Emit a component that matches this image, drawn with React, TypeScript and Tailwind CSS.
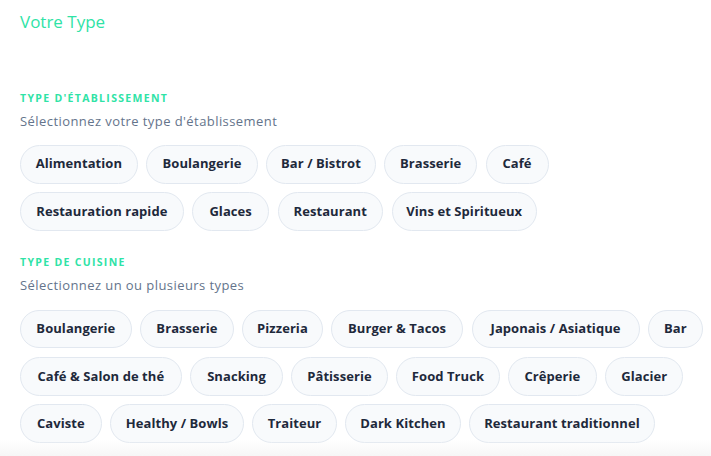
import React, { useState } from 'react';

type Chip = { label: string; w: string };

// chip widths measured off the design so the rows wrap the same way
const etablissements: Chip[] = [
  { label: 'Alimentation', w: 'w-[117.7px]' },
  { label: 'Boulangerie', w: 'w-[111.4px]' },
  { label: 'Bar / Bistrot', w: 'w-[109.4px]' },
  { label: 'Brasserie', w: 'w-[92.7px]' },
  { label: 'Café', w: 'w-[63px]' },
  { label: 'Restauration rapide', w: 'w-[163.7px]' },
  { label: 'Glaces', w: 'w-[76.7px]' },
  { label: 'Restaurant', w: 'w-[105.4px]' },
  { label: 'Vins et Spiritueux', w: 'w-[145.4px]' },
];

const cuisines: Chip[] = [
  { label: 'Boulangerie', w: 'w-[111.7px]' },
  { label: 'Brasserie', w: 'w-[93.4px]' },
  { label: 'Pizzeria', w: 'w-[80.4px]' },
  { label: 'Burger & Tacos', w: 'w-[131.7px]' },
  { label: 'Japonais / Asiatique', w: 'w-[168px]' },
  { label: 'Bar', w: 'w-[54.4px]' },
  { label: 'Café & Salon de thé', w: 'w-[161.7px]' },
  { label: 'Snacking', w: 'w-[92.4px]' },
  { label: 'Pâtisserie', w: 'w-[96.4px]' },
  { label: 'Food Truck', w: 'w-[103.4px]' },
  { label: 'Crêperie', w: 'w-[88.4px]' },
  { label: 'Glacier', w: 'w-[78px]' },
  { label: 'Caviste', w: 'w-[81.7px]' },
  { label: 'Healthy / Bowls', w: 'w-[133.4px]' },
  { label: 'Traiteur', w: 'w-[84.4px]' },
  { label: 'Dark Kitchen', w: 'w-[115.4px]' },
  { label: 'Restaurant traditionnel', w: 'w-[185.4px]' },
];

function ChipGroup({
  title,
  hint,
  items,
  className = '',
}: {
  title: string;
  hint: string;
  items: Chip[];
  className?: string;
}) {
  const [selected, setSelected] = useState<string[]>([]);

  const toggle = (label: string) => {
    setSelected((s) => (s.includes(label) ? s.filter((x) => x !== label) : [...s, label]));
  };

  return (
    <div className={className}>
      <h3 className="text-[10.5px] leading-[14px] font-bold uppercase tracking-[0.125em] text-[#2fe3a6]">
        {title}
      </h3>
      <p className="mt-[6px] text-[13px] leading-5 tracking-[0.033em] text-[#64748b]">{hint}</p>
      <div className="mt-[14.3px] flex flex-wrap gap-[8.6px]">
        {items.map((item) => {
          const on = selected.includes(item.label);
          return (
            <button
              key={item.label}
              onClick={() => toggle(item.label)}
              className={`${item.w} h-[38.7px] shrink-0 rounded-full border text-[13px] font-bold tracking-[0.005em] whitespace-nowrap flex items-center justify-center ${
                on
                  ? 'border-[#2fe3a6] bg-[#ecfdf5] text-[#065f46]'
                  : 'border-[#e2e8f0] bg-[#f8fafc] text-[#1e293b]'
              }`}
            >
              {item.label}
            </button>
          );
        })}
      </div>
    </div>
  );
}

export default function App() {
  return (
    <div
      className="relative h-[456px] w-full overflow-hidden bg-white pl-5 pr-1 pt-[9.7px]"
      style={{ fontFamily: '"Open Sans", "Liberation Sans", sans-serif' }}
    >
      <h2 className="text-[17px] leading-6 font-medium text-[#2fe3a6]">Votre Type</h2>

      <ChipGroup
        className="mt-[56.9px]"
        title="Type d'établissement"
        hint="Sélectionnez votre type d'établissement"
        items={etablissements}
      />

      <ChipGroup
        className="mt-[24.6px]"
        title="Type de cuisine"
        hint="Sélectionnez un ou plusieurs types"
        items={cuisines}
      />

      {/* soft fade at the bottom edge */}
      <div className="pointer-events-none absolute inset-x-0 bottom-0 h-[16px] bg-gradient-to-b from-transparent to-[#f6f6f6]" />
    </div>
  );
}
